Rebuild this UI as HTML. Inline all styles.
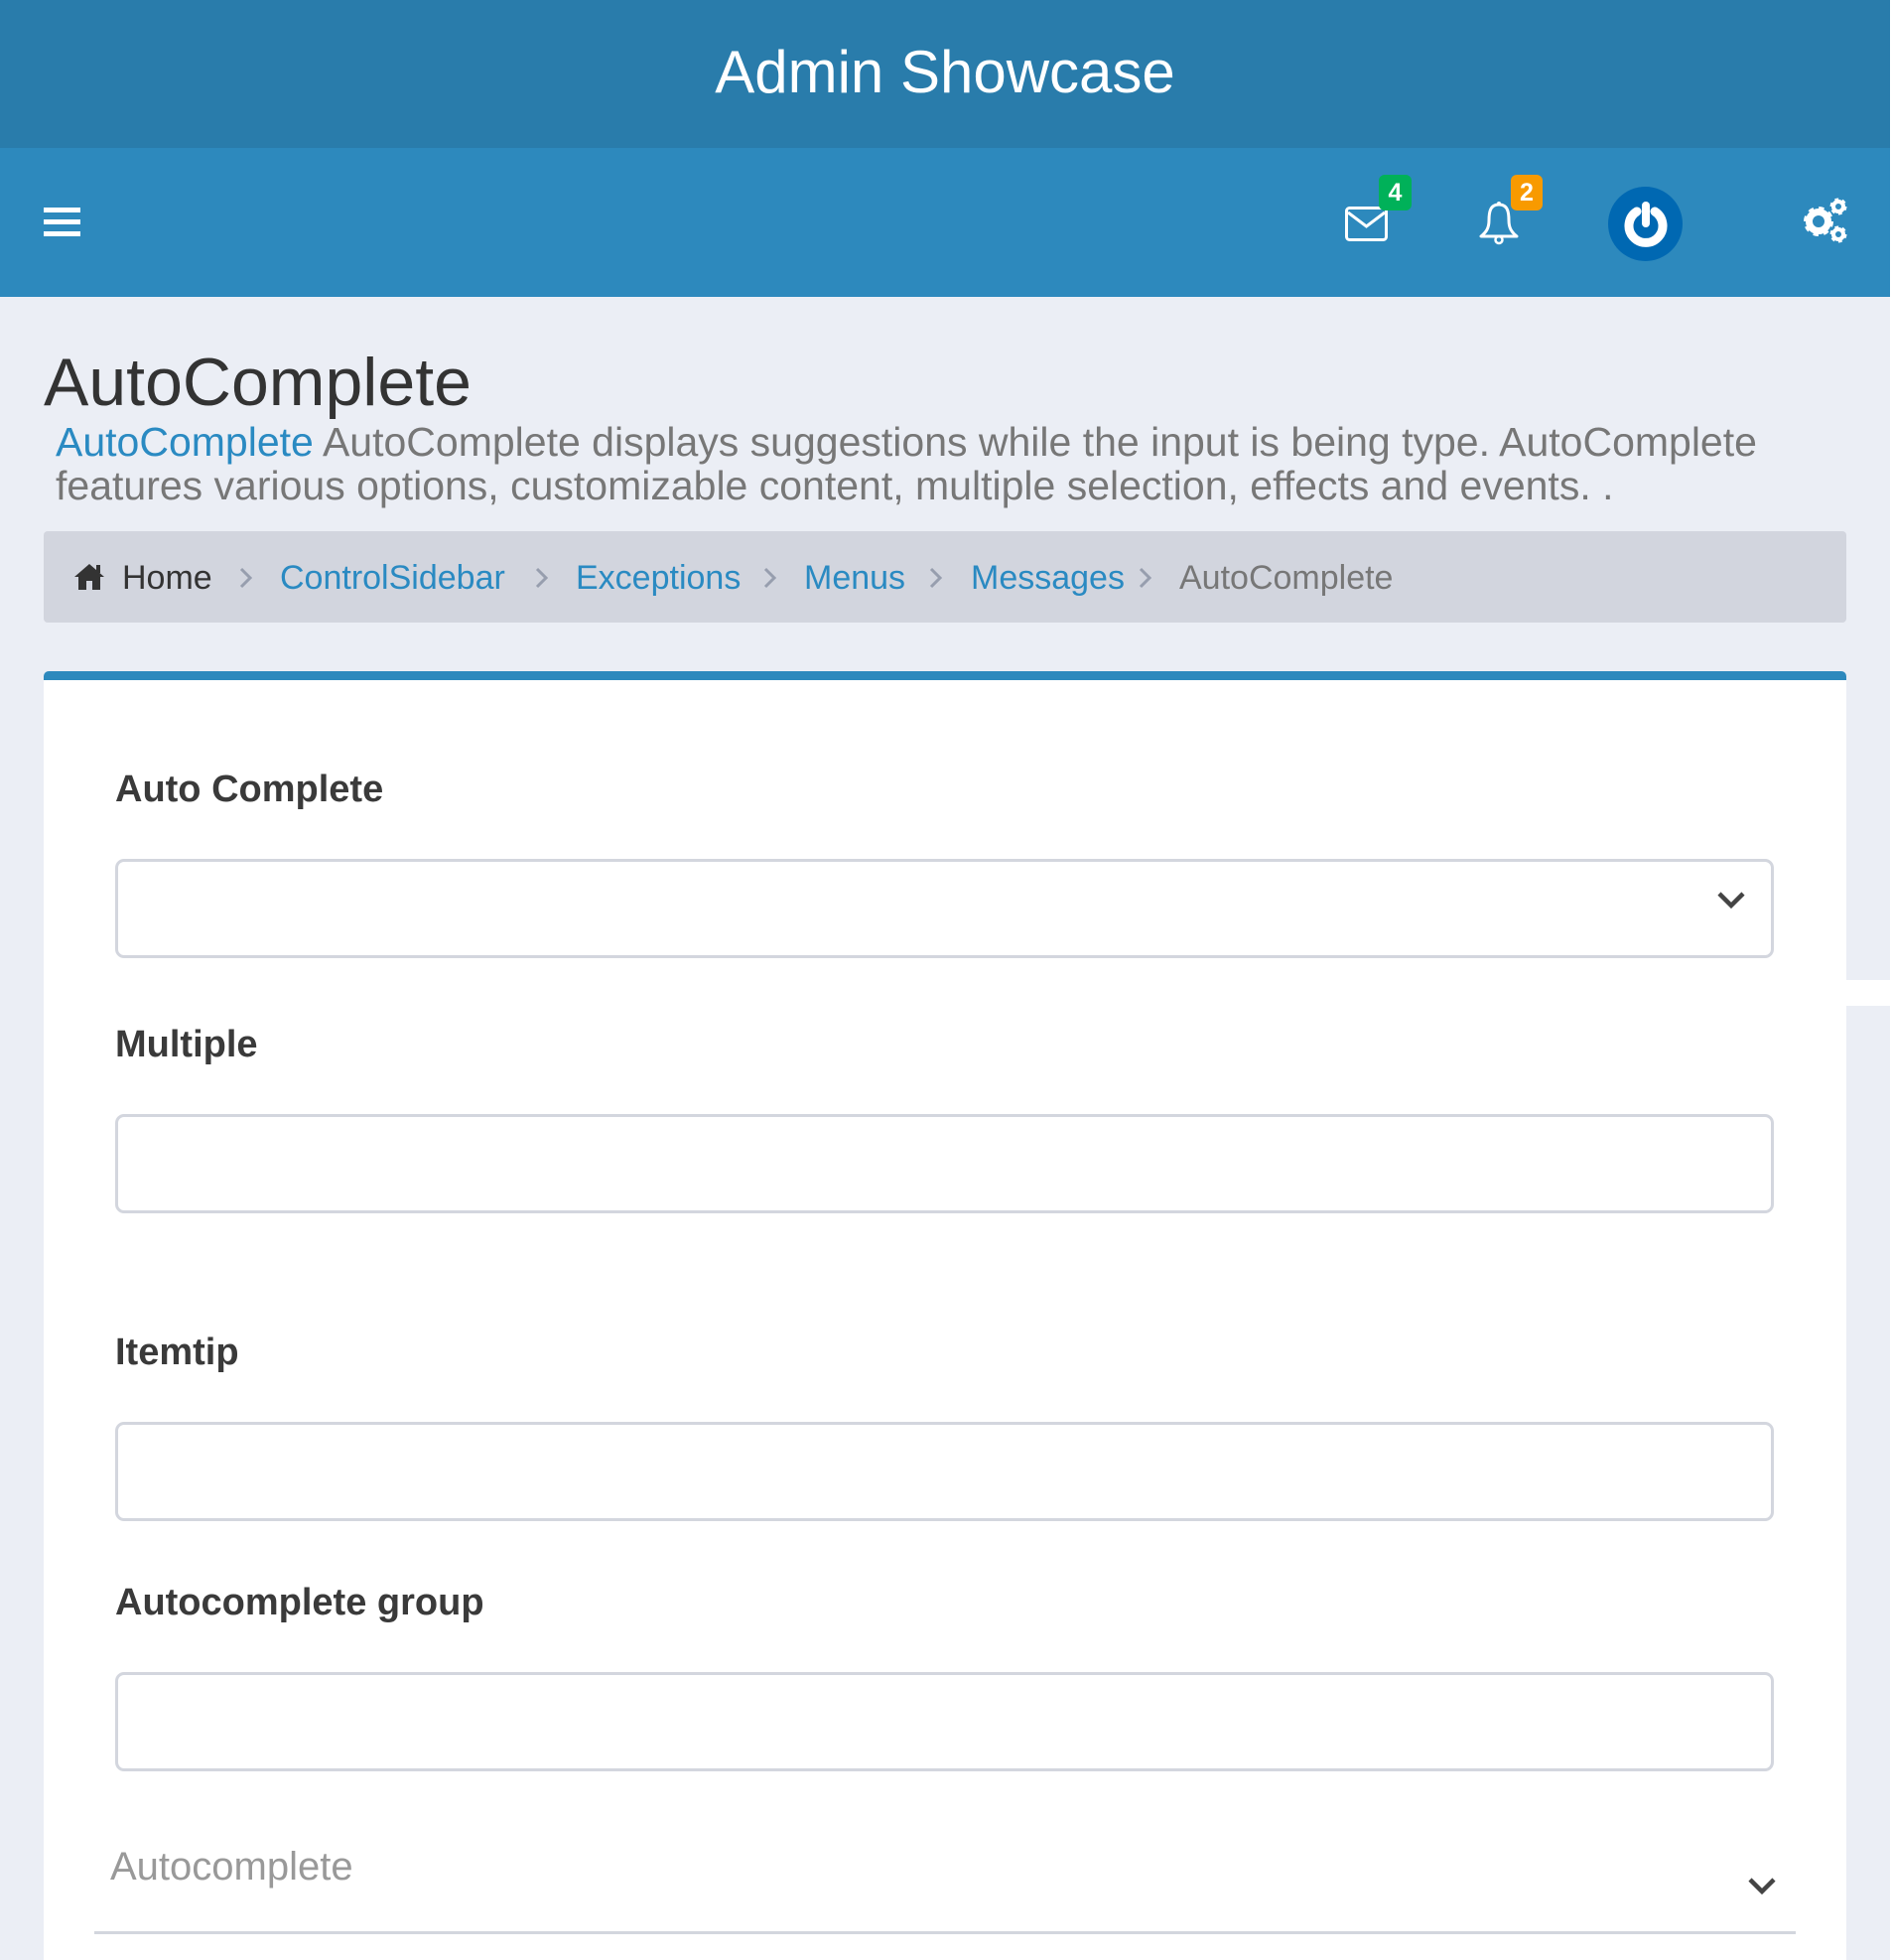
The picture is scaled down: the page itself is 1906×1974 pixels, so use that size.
<!DOCTYPE html>
<html><head><meta charset="utf-8"><style>
*{margin:0;padding:0;box-sizing:border-box}
html,body{width:1906px;height:1974px;overflow:hidden;background:#fff;font-family:"Liberation Sans",sans-serif}
.a{position:absolute;white-space:nowrap}
.bc{font-size:34px;top:562px;line-height:40px}
.lk{color:#2a8ac2}
.lbl{font-size:38px;font-weight:bold;color:#3a3a3a;left:116px}
.inp{position:absolute;left:116px;width:1671px;height:100px;border:3px solid #d3d6de;border-radius:9px;background:#fff}
</style></head><body>
<div class="a" style="left:0;top:0;width:1904px;height:149px;background:#297cab"></div>
<div class="a" style="left:0;top:38px;width:1904px;text-align:center;color:#fff;font-size:60px;line-height:70px">Admin Showcase</div>
<div class="a" style="left:0;top:149px;width:1904px;height:150px;background:#2d89bd"></div>
<div class="a" style="left:44px;top:209px;width:37px;height:5px;background:#fff"></div>
<div class="a" style="left:44px;top:221px;width:37px;height:5px;background:#fff"></div>
<div class="a" style="left:44px;top:233px;width:37px;height:5px;background:#fff"></div>
<!-- mail -->
<svg class="a" style="left:1354px;top:207px" width="46" height="37" viewBox="0 0 46 37"><rect x="2.5" y="2.5" width="40" height="32" rx="3" fill="none" stroke="#fff" stroke-width="3"/><path d="M4 7 L22.5 21 L41 7" fill="none" stroke="#fff" stroke-width="3"/></svg>
<div class="a" style="left:1389px;top:176px;width:33px;height:36px;background:#00b159;border-radius:6px;color:#fff;font-weight:bold;font-size:25px;text-align:center;line-height:36px">4</div>
<!-- bell -->
<svg class="a" style="left:1488px;top:202px" width="44" height="45" viewBox="0 0 44 45"><circle cx="22" cy="3" r="2" fill="#fff"/><path d="M22 4 C13 4 12 12 12 20 C12 28 9 32 4 36 L40 36 C35 32 32 28 32 20 C32 12 31 4 22 4 Z" fill="none" stroke="#fff" stroke-width="3" stroke-linejoin="round"/><circle cx="22" cy="39.5" r="3.5" fill="none" stroke="#fff" stroke-width="2.5"/></svg>
<div class="a" style="left:1522px;top:176px;width:32px;height:36px;background:#f89a00;border-radius:6px;color:#fff;font-weight:bold;font-size:25px;text-align:center;line-height:36px">2</div>
<!-- power -->
<div class="a" style="left:1620px;top:188px;width:75px;height:75px;border-radius:50%;background:#0068b2"></div>
<svg class="a" style="left:1631px;top:198px" width="54" height="56" viewBox="0 0 54 56"><path d="M18 15 A17 17 0 1 0 36 15" fill="none" stroke="#fff" stroke-width="9" stroke-linecap="round"/><line x1="27" y1="9" x2="27" y2="27" stroke="#fff" stroke-width="8" stroke-linecap="round"/></svg>
<!-- gears -->
<svg class="a" style="left:1813px;top:196px" width="56" height="56" viewBox="0 0 56 56">
<circle cx="19" cy="27" r="12" fill="none" stroke="#fff" stroke-width="6" stroke-dasharray="4.7 4.7"/>
<circle cx="19" cy="27" r="9.5" fill="none" stroke="#fff" stroke-width="7"/>
<circle cx="39" cy="12" r="6.5" fill="none" stroke="#fff" stroke-width="4" stroke-dasharray="3.4 3.4"/>
<circle cx="39" cy="12" r="5" fill="none" stroke="#fff" stroke-width="4"/>
<circle cx="39" cy="40" r="6.5" fill="none" stroke="#fff" stroke-width="4" stroke-dasharray="3.4 3.4"/>
<circle cx="39" cy="40" r="5" fill="none" stroke="#fff" stroke-width="4"/>
</svg>
<div class="a" style="left:0;top:299px;width:1904px;height:1675px;background:#ebeef5"></div>
<div class="a" style="left:1904px;top:0;width:2px;height:1974px;background:#fff"></div>
<div class="a" style="left:44px;top:345px;font-size:68px;color:#333;line-height:80px">AutoComplete</div>
<div class="a" style="left:56px;top:423px;font-size:41px;color:#777;line-height:44px">
<span class="lk">AutoComplete</span> AutoComplete displays suggestions while the input is being type. AutoComplete<br>features various options, customizable content, multiple selection, effects and events. .</div>
<div class="a" style="left:44px;top:535px;width:1816px;height:92px;background:#d2d5de;border-radius:4px"></div>
<svg class="a" style="left:74px;top:566px" width="32" height="30" viewBox="0 0 32 30"><path d="M16 2 L1 15 L5 15 L5 28 L13 28 L13 19 L19 19 L19 28 L27 28 L27 15 L31 15 Z" fill="#333"/><rect x="23" y="3" width="4" height="8" fill="#333"/></svg>
<div class="a bc" style="left:123px;color:#333">Home</div>
<div class="a bc lk" style="left:282px">ControlSidebar</div>
<div class="a bc lk" style="left:580px">Exceptions</div>
<div class="a bc lk" style="left:810px">Menus</div>
<div class="a bc lk" style="left:978px">Messages</div>
<div class="a bc" style="left:1188px;color:#777">AutoComplete</div>
<svg class="a" style="left:0;top:570px" width="1300" height="24" viewBox="0 0 1300 24"><g fill="none" stroke="#979eae" stroke-width="3"><path d="M243 3 L252 12 L243 21"/><path d="M541 3 L550 12 L541 21"/><path d="M771 3 L780 12 L771 21"/><path d="M938 3 L947 12 L938 21"/><path d="M1149 3 L1158 12 L1149 21"/></g></svg>
<div class="a" style="left:44px;top:676px;width:1816px;height:1298px;background:#fff;border-top:9px solid #2d89bd;border-radius:5px 5px 0 0"></div>
<div class="a" style="left:1860px;top:987px;width:44px;height:26px;background:#fff"></div>
<div class="a lbl" style="top:774px">Auto Complete</div>
<div class="inp" style="top:865px"></div>
<svg class="a" style="left:1729px;top:897px" width="30" height="20" viewBox="0 0 30 20"><path d="M3 3 L15 15 L27 3" fill="none" stroke="#444" stroke-width="4.5"/></svg>
<div class="a lbl" style="top:1031px">Multiple</div>
<div class="inp" style="top:1122px"></div>
<div class="a lbl" style="top:1341px">Itemtip</div>
<div class="inp" style="top:1432px"></div>
<div class="a lbl" style="top:1593px">Autocomplete group</div>
<div class="inp" style="top:1684px"></div>
<div class="a" style="left:111px;top:1856px;font-size:40px;color:#999;line-height:48px">Autocomplete</div>
<svg class="a" style="left:1760px;top:1890px" width="30" height="20" viewBox="0 0 30 20"><path d="M3 3 L15 15 L27 3" fill="none" stroke="#444" stroke-width="4.5"/></svg>
<div class="a" style="left:95px;top:1945px;width:1714px;height:3px;background:#d3d6de"></div>
</body></html>
